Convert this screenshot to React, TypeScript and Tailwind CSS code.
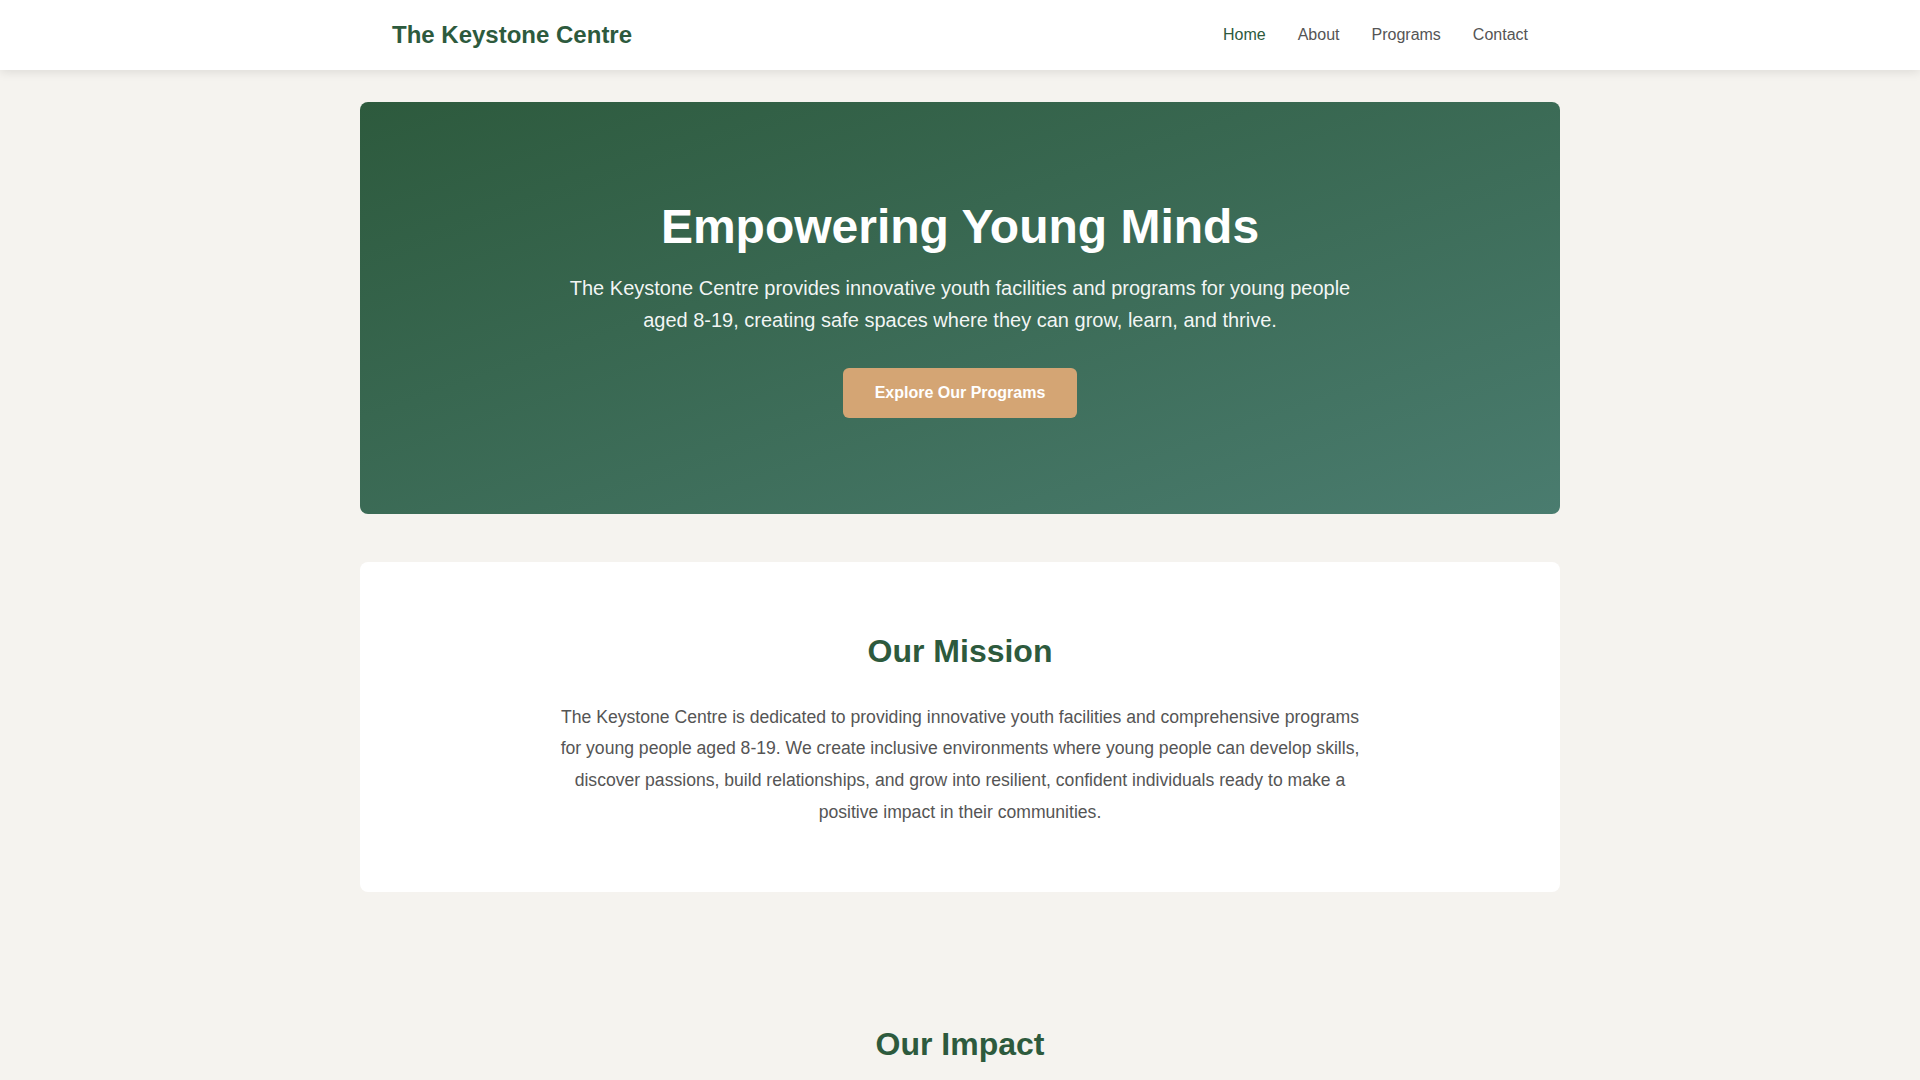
const navLinks = ["Home", "About", "Programs", "Contact"];

function Header() {
  return (
    <header className="bg-white shadow-[0_2px_10px_rgba(0,0,0,0.1)]">
      <nav className="max-w-[1200px] mx-auto px-8 h-[70px] flex items-center justify-between">
        <div className="text-2xl font-bold text-[#2d5a3d]">The Keystone Centre</div>
        <ul className="flex gap-8">
          {navLinks.map((link, i) => (
            <li key={link}>
              <a
                href="#"
                className={i === 0 ? "text-[#2d5a3d]" : "text-[#555555]"}
              >
                {link}
              </a>
            </li>
          ))}
        </ul>
      </nav>
    </header>
  );
}

function Hero() {
  return (
    <section className="rounded-lg bg-gradient-to-br from-[#2d5a3d] to-[#4a7c6f] text-white text-center py-24 px-8">
      <h1 className="text-5xl font-bold leading-[1.2] mb-4">Empowering Young Minds</h1>
      <p className="text-xl leading-[1.6] max-w-[800px] mx-auto mb-8 text-white/95">
        The Keystone Centre provides innovative youth facilities and programs for young people
        aged 8-19, creating safe spaces where they can grow, learn, and thrive.
      </p>
      <a
        href="#"
        className="inline-block bg-[#d4a574] text-white font-bold px-8 py-3 leading-[26px] rounded-md"
      >
        Explore Our Programs
      </a>
    </section>
  );
}

function Mission() {
  return (
    <section className="bg-white rounded-lg pt-[65px] pb-16 px-16 text-center mt-12">
      <h2 className="text-[32px] font-bold leading-[1.5] text-[#2d5a3d] mb-[27px]">Our Mission</h2>
      <p className="max-w-[800px] mx-auto text-[17.6px] leading-[1.8] text-[#555555]">
        The Keystone Centre is dedicated to providing innovative youth facilities and comprehensive
        programs for young people aged 8-19. We create inclusive environments where young people can
        develop skills, discover passions, build relationships, and grow into resilient, confident
        individuals ready to make a positive impact in their communities.
      </p>
    </section>
  );
}

function Impact() {
  return (
    <section className="mt-16 pt-16 pb-8 text-center">
      <h2 className="text-[32px] font-bold leading-[1.5] text-[#2d5a3d]">Our Impact</h2>
    </section>
  );
}

export default function App() {
  return (
    <div className="min-h-screen bg-[#f5f3ef] font-['Liberation_Sans',Arial,sans-serif] text-[#333333]">
      <Header />
      <main className="max-w-[1200px] mx-auto pt-8">
        <Hero />
        <Mission />
        <Impact />
      </main>
    </div>
  );
}
